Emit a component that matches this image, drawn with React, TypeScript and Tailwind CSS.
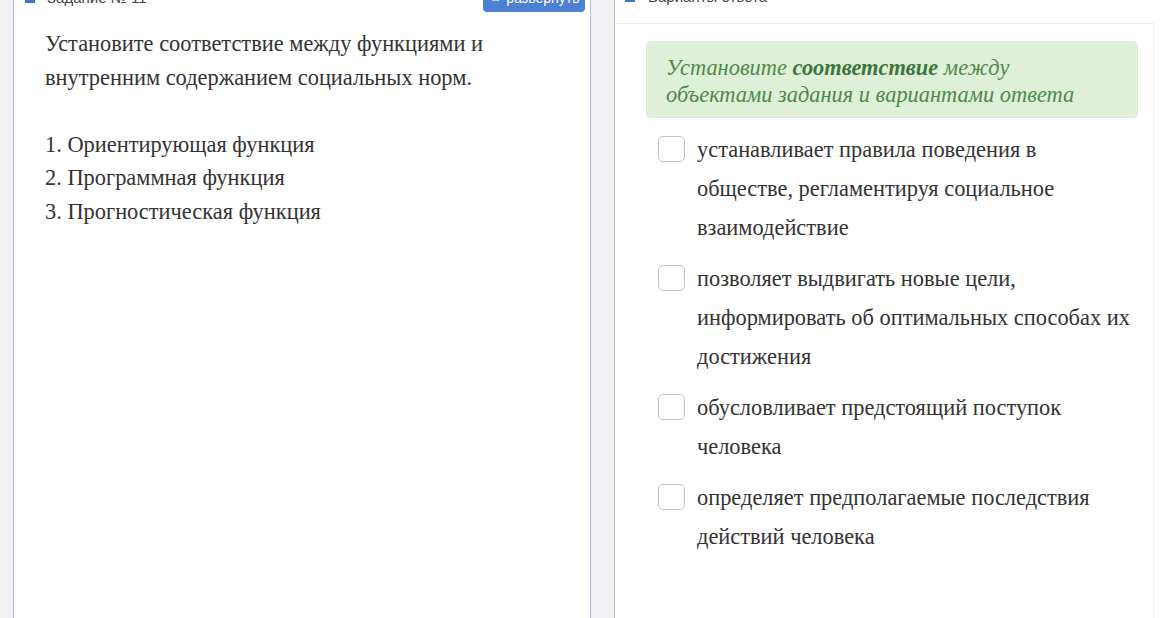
import React from 'react';

const options = [
  'устанавливает правила поведения в обществе, регламентируя социальное взаимодействие',
  'позволяет выдвигать новые цели, информировать об оптимальных способах их достижения',
  'обусловливает предстоящий поступок человека',
  'определяет предполагаемые последствия действий человека',
];

const App: React.FC = () => {
  return (
    <div
      className="h-[618px] w-[1168px] overflow-hidden bg-[#f1f1f3] text-[#333]"
      style={{ fontFamily: '"Liberation Serif", "Times New Roman", serif' }}
    >
      {/* scrolled a little: the panel headers sit partly above the top edge */}
      <div className="-mt-[24px] flex h-[642px] pl-[13px]">
        {/* task panel */}
        <div className="flex w-[578px] flex-col border-x border-[#b6bcdf] bg-white">
          <div className="flex h-[48px] items-center justify-between pb-[4px] pl-[11px] pr-[5px]">
            <div className="flex items-center text-[15px] text-[#444]" style={{ fontFamily: '"Liberation Sans", Arial, sans-serif' }}>
              <span className="inline-block h-[9px] w-[10px] bg-[#3f72c4]" />
              <span className="ml-[12px]">Задание № 11</span>
            </div>
            <button className="h-[28px] w-[102px] rounded-[4px] bg-[#4d80d2] text-[14px] text-white" style={{ fontFamily: '"Liberation Sans", Arial, sans-serif' }}>
              ⇔ развернуть
            </button>
          </div>
          <div className="pl-[31px] pr-[40px] pt-[3px] text-[22.4px] leading-[33.5px]">
            <p>Установите соответствие между функциями и внутренним содержанием социальных норм.</p>
            <p className="mt-[33.5px]">1. Ориентирующая функция</p>
            <p>2. Программная функция</p>
            <p>3. Прогностическая функция</p>
          </div>
        </div>

        {/* answers panel */}
        <div className="ml-[23px] flex flex-1 flex-col border-l border-[#b6bcdf] bg-white">
          <div className="mr-[14px] flex h-[48px] items-center border-b border-[#ececec] pb-[4px] pl-[10px]">
            <div className="flex items-center text-[15px] text-[#444]" style={{ fontFamily: '"Liberation Sans", Arial, sans-serif' }}>
              <span className="inline-block h-[9px] w-[10px] bg-[#3f72c4]" />
              <span className="ml-[13px]">Варианты ответа</span>
            </div>
          </div>
          <div className="mr-[14px] flex-1 border-r border-[#efefef] pl-[31px] pr-[15px] pt-[17px]">
            <div className="rounded-[5px] border border-[#d9ebd2] bg-[#dff0d8] px-[19px] pb-[9px] pt-[12px] text-[22.4px] italic leading-[27px] text-[#4d8a48]">
              Установите <b className="font-bold text-[#3c763d]">соответствие</b> между
              <br />
              объектами задания и вариантами ответа
            </div>
            <div className="mt-[12px] flex flex-col gap-[12px] pl-[12px]">
              {options.map((o) => (
                <div key={o} className="flex items-start">
                  <span className="mt-[6px] h-[26px] w-[27px] shrink-0 rounded-[5px] border border-[#c4c4c4] bg-white" />
                  <span className="ml-[12px] pr-[6px] text-[22.4px] leading-[39px]">{o}</span>
                </div>
              ))}
            </div>
          </div>
        </div>
      </div>
    </div>
  );
};

export default App;
